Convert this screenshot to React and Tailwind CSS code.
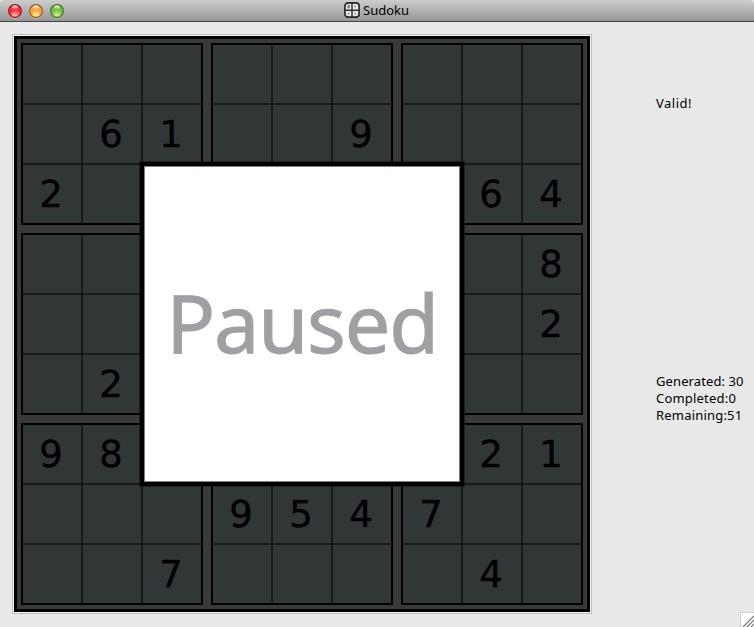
const givens = [
  '         ',
  ' 61  9   ',
  '2      64',
  '        8',
  '        2',
  ' 2       ',
  '98     21',
  '   9547  ',
  '  7    4 ',
];

const lights = [
  { id: 'close', edge: '#8c1a1e', mid: '#f5323c', low: '#ffc0bb' },
  { id: 'minimise', edge: '#96571f', mid: '#f8a53f', low: '#fff3a0' },
  { id: 'zoom', edge: '#3a7020', mid: '#76bf45', low: '#d8fa9c' },
];

function TrafficLight({ id, edge, mid, low }) {
  return (
    <svg width="15" height="16" viewBox="0 0 15 16">
      <defs>
        <radialGradient id={`${id}-body`} cx="50%" cy="85%" r="85%">
          <stop offset="0" stopColor={low} />
          <stop offset="0.5" stopColor={mid} />
          <stop offset="0.8" stopColor={mid} />
          <stop offset="1" stopColor={edge} />
        </radialGradient>
        <linearGradient id={`${id}-shine`} x1="0" y1="0" x2="0" y2="1">
          <stop offset="0" stopColor="#fff" stopOpacity="1" />
          <stop offset="1" stopColor="#fff" stopOpacity="0.1" />
        </linearGradient>
      </defs>
      <circle cx="8" cy="8.8" r="6.9" fill="#fff" opacity="0.3" />
      <circle cx="8" cy="8" r="6.4" fill={`url(#${id}-body)`} stroke={edge} strokeWidth="1.1" />
      <ellipse cx="8" cy="4.2" rx="3" ry="2" fill={`url(#${id}-shine)`} />
    </svg>
  );
}

function SudokuIcon() {
  return (
    <svg width="16" height="16" viewBox="0 0 16 16">
      <rect x="0.9" y="0.9" width="14.2" height="14.2" rx="3.2" fill="#e9e9e9" stroke="#222" strokeWidth="1.6" />
      <path d="M8 1v14M1 8.2h14" stroke="#333" strokeWidth="1.5" />
      <path d="M4 3.4h1.2v2.2H4zM11.2 3.6v1.6M4.6 10.8v1.6M11.2 10.8v1.6" fill="none" stroke="#777" strokeWidth="1.1" />
    </svg>
  );
}

function Box({ row, col }) {
  const cells = [0, 1, 2].flatMap((r) => givens[row * 3 + r].slice(col * 3, col * 3 + 3).split(''));
  return (
    <div className="grid size-[182px] grid-cols-[58px_58px_58px] grid-rows-[58px_58px_58px] gap-[2px] rounded-[1px] border-2 border-black bg-[#313737] bg-[image:repeating-linear-gradient(90deg,transparent_0_58px,rgba(0,0,0,0.5)_58px_60px),repeating-linear-gradient(180deg,transparent_0_58px,rgba(0,0,0,0.5)_58px_60px)]">
      {cells.map((n, i) => (
        <div key={i} className="flex items-center justify-center pr-[2px] pt-[2px]">
          <span className="text-[37px] leading-[56px] text-black [-webkit-text-stroke:0.4px_black]">{n.trim()}</span>
        </div>
      ))}
    </div>
  );
}

export default function App() {
  return (
    <div className="flex h-[627px] w-[754px] flex-col overflow-hidden bg-[#e8e8e8] font-['Noto_Sans',sans-serif] text-[13px] text-black">
      <header className="flex h-[22px] shrink-0 items-start rounded-t-[4px] border-b border-[#454545] bg-linear-to-b from-[#cdcdcd] to-[#979797] pl-[7px]">
        <div className="flex gap-[6px] pt-[3px]">
          {lights.map((l) => (
            <TrafficLight key={l.id} {...l} />
          ))}
        </div>
        <div className="ml-[280px] flex items-center gap-[3px] pt-[2px]">
          <SudokuIcon />
          <span className="leading-4">Sudoku</span>
        </div>
      </header>

      <main className="flex flex-1">
        <div className="relative ml-[12px] mt-[12px] size-[580px] shrink-0 border border-[#bdbdbd] bg-[#f6f6f6] p-px">
          <div className="grid size-[576px] grid-cols-[182px_182px_182px] gap-[8px] border-[3px] border-black bg-[#393939] p-[4px] font-['DejaVu_Sans',sans-serif]">
            {[0, 1, 2].flatMap((r) => [0, 1, 2].map((c) => <Box key={`${r}${c}`} row={r} col={c} />))}
          </div>
          <div className="absolute left-[127px] top-[127px] flex size-[324px] items-center justify-center border-4 border-black bg-white pb-[5px] shadow-[inset_0_0_0_1px_#808080,0_0_0_1px_rgba(0,0,0,0.4)]">
            <span className="font-['Noto_Sans',sans-serif] text-[81px] leading-none tracking-[-1.2px] text-[#a09fa4] [-webkit-text-stroke:1px_#a09fa4]">Paused</span>
          </div>
        </div>

        <aside className="ml-[64px] flex flex-1 flex-col whitespace-nowrap leading-[17px]">
          <p className="mt-[73px] tracking-[0.5px]">Valid!</p>
          <div className="mt-[261px]">
            <p className="tracking-[0.1px]">Generated: 30</p>
            <p className="tracking-[0.2px]">Completed:0</p>
            <p className="tracking-[0.2px]">Remaining:51</p>
          </div>
          <svg className="mt-auto self-end" width="14" height="15" viewBox="0 0 14 15">
            <path d="M0 0h14v15H0z" fill="#fff" />
            <path d="M0.5 15V0.5H14" fill="none" stroke="#cfcfcf" />
            <path d="M3 15L14 4M7 15l7-7M11 15l3-3" stroke="#777" strokeWidth="1.2" />
          </svg>
        </aside>
      </main>
    </div>
  );
}
